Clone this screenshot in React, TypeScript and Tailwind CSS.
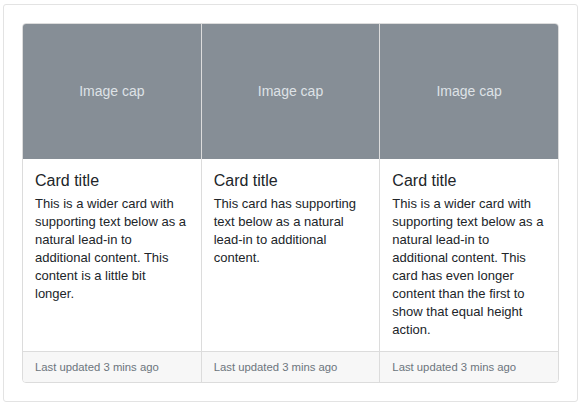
const cards = [
  {
    text: "This is a wider card with supporting text below as a natural lead-in to additional content. This content is a little bit longer.",
  },
  {
    text: "This card has supporting text below as a natural lead-in to additional content.",
  },
  {
    text: "This is a wider card with supporting text below as a natural lead-in to additional content. This card has even longer content than the first to show that equal height action.",
  },
];

export default function App() {
  return (
    <div className="min-h-[406px] bg-white pl-[3px] pt-[4px] font-['Liberation_Sans',Arial,sans-serif] text-[#212529]">
      <div className="w-[575px] rounded-[3px] border border-[#e3e3e3] p-[18px]">
        <div className="flex overflow-hidden rounded-[4px] border border-[#dcdcdc]">
          {cards.map((card, i) => (
            <div
              key={i}
              className={`flex flex-1 flex-col ${i > 0 ? "border-l border-[#dcdcdc]" : ""}`}
            >
              <div className="flex h-[135px] items-center justify-center bg-[#868e96] text-[14px] text-[#dee2e6]">
                Image cap
              </div>
              <div className="flex-1 px-[12px] pt-[12px] pb-[12px]">
                <h5 className="mb-[5px] text-[16px] leading-[19px]">Card title</h5>
                <p className="max-w-[152.5px] text-[13px] leading-[18px]">{card.text}</p>
              </div>
              <div className="flex h-[31px] items-center border-t border-[#dcdcdc] bg-[#f7f7f7] px-[12px] text-[11.3px] text-[#6c757d]">
                Last updated 3 mins ago
              </div>
            </div>
          ))}
        </div>
      </div>
    </div>
  );
}
